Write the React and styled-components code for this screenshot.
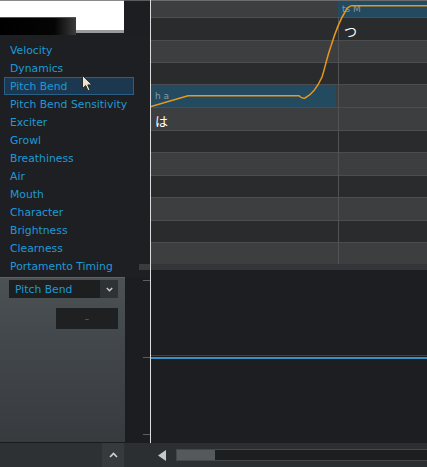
import React from 'react';
import styled, { createGlobalStyle } from 'styled-components';

const params = [
  'Velocity', 'Dynamics', 'Pitch Bend', 'Pitch Bend Sensitivity', 'Exciter', 'Growl',
  'Breathiness', 'Air', 'Mouth', 'Character', 'Brightness', 'Clearness', 'Portamento Timing',
];

// piano roll rows, top to bottom: [height, light key?]
const rows = [
  [17, true], [23, false], [22, true], [22, false], [23, true], [23, true],
  [22, false], [23, true], [22, false], [23, true], [22, false], [22, true],
];

function App() {
  return (
    <>
      <GlobalStyle />
      <Frame>
        <Main>
          <LeftPane>
            <Header>
              <Logo>
                <LogoTop />
                <LogoBottom>
                  <LogoBlack />
                  <LogoRest />
                </LogoBottom>
              </Logo>
              <HeaderFill />
            </Header>
            <ParamList>
              {params.map((p) => (
                <ParamItem key={p} $selected={p === 'Pitch Bend'}>{p}</ParamItem>
              ))}
              <Cursor width="11" height="17" viewBox="0 0 11 17">
                <path d="M0.5 0.5 L0.5 13.5 L3.7 10.6 L6 15.8 L8 14.9 L5.8 9.9 L10 9.9 Z" fill="#e9e1d2" stroke="#2a2a2a" strokeWidth="1" />
              </Cursor>
              <SplitHandle />
            </ParamList>
            <BottomRow>
              <ParamPanel>
                <Dropdown>
                  <DropdownText>Pitch Bend</DropdownText>
                  <DropdownButton>
                    <svg width="7" height="5" viewBox="0 0 7 5">
                      <polyline points="0.8,1 3.5,3.8 6.2,1" fill="none" stroke="#c9ccce" strokeWidth="1.4" />
                    </svg>
                  </DropdownButton>
                </Dropdown>
                <ValueRow>
                  <ValueBox>–</ValueBox>
                </ValueRow>
              </ParamPanel>
              <TickGutter>
                <Tick />
                <Tick />
                <Tick />
              </TickGutter>
            </BottomRow>
          </LeftPane>
          <Divider />
          <RightPane>
            <Grid>
              {rows.map(([h, light], i) => (
                <GridRow key={i} $h={h} $light={light} $first={i === 0} />
              ))}
              <Note $left={0} $top={85} $width={185} $height={22}>h a</Note>
              <Note $left={187} $top={1} $width={89} $height={16}>ts M</Note>
              <Lyric $left={4} $top={113}>は</Lyric>
              <Lyric $left={193} $top={23}>つ</Lyric>
              <Curve width="276" height="264" viewBox="0 0 276 264">
                <line x1="187.5" y1="17" x2="187.5" y2="264" stroke="#505255" strokeWidth="1" />
                <path
                  d="M0 106.5 L37 95.8 L148 95.8 Q151 99 154 98 C162 94 167 86 171 77 C174 68 176 57 180 46 C184 33 189 20 194 12 C196 8 198 5.8 201 5.8 L276 5.8"
                  fill="none" stroke="#e8981f" strokeWidth="1.5"
                />
              </Curve>
            </Grid>
            <Splitter />
            <ControlArea>
              <GreyLine />
              <BlueLine />
            </ControlArea>
          </RightPane>
        </Main>
        <BottomBar>
          <BottomLeft>
            <UpButton>
              <svg width="9" height="6" viewBox="0 0 9 6">
                <polyline points="1,5 4.5,1.5 8,5" fill="none" stroke="#cfd2d4" strokeWidth="1.6" />
              </svg>
            </UpButton>
          </BottomLeft>
          <BottomGap />
          <ScrollLeft>
            <svg width="8" height="11" viewBox="0 0 8 11">
              <polygon points="8,0 0,5.5 8,11" fill="#c6c9cb" />
            </svg>
          </ScrollLeft>
          <ScrollTrack>
            <ScrollThumb />
          </ScrollTrack>
        </BottomBar>
      </Frame>
    </>
  );
}

// Styles

const GlobalStyle = createGlobalStyle`
  html, body {
    margin: 0;
    padding: 0;
    background: #1d1e21;
  }
  body {
    font-family: "DejaVu Sans", Verdana, sans-serif;
  }
`;

const Frame = styled.div`
  width: 427px;
  height: 467px;
  display: flex;
  flex-direction: column;
  overflow: hidden;
  background: #1d1e21;
`;

const Main = styled.div`
  height: 443px;
  display: flex;
`;

const LeftPane = styled.div`
  width: 150px;
  display: flex;
  flex-direction: column;
  background: #1e1f22;
`;

const Header = styled.div`
  height: 35px;
  display: flex;
`;

const Logo = styled.div`
  width: 124px;
  display: flex;
  flex-direction: column;
  border-top: 1px solid #8a8a8a;
`;

const LogoTop = styled.div`
  height: 16px;
  background: #ffffff;
`;

const LogoBottom = styled.div`
  flex: 1;
  display: flex;
`;

const LogoBlack = styled.div`
  width: 76px;
  background: linear-gradient(90deg, #000 0%, #050505 72%, #3c3c3c 100%);
  border-top: 1px solid #4b5858;
`;

const LogoRest = styled.div`
  flex: 1;
  background: #ffffff;
  border-bottom: 3px solid #9a9a9a;
  margin-bottom: 2px;
`;

const HeaderFill = styled.div`
  flex: 1;
  background: #1d1e21;
  border-top: 1px solid #5a5c5e;
`;

const ParamList = styled.div`
  position: relative;
  flex: 1;
  padding-top: 6px;
  display: flex;
  flex-direction: column;
`;

const ParamItem = styled.div`
  height: 18px;
  box-sizing: border-box;
  margin-left: 4px;
  width: 130px;
  padding-left: 5px;
  display: flex;
  align-items: center;
  font-size: 10.8px;
  color: #1d9ad6;
  white-space: nowrap;
  border: 1px solid ${(p) => (p.$selected ? '#2a5f86' : 'transparent')};
  background: ${(p) => (p.$selected ? '#1b3850' : 'transparent')};
`;

const Cursor = styled.svg`
  position: absolute;
  left: 82px;
  top: 40px;
`;

const SplitHandle = styled.div`
  position: absolute;
  right: 0;
  top: 229px;
  width: 11px;
  height: 6px;
  background: #393b3e;
`;

const BottomRow = styled.div`
  height: 166px;
  display: flex;
`;

const ParamPanel = styled.div`
  width: 125px;
  box-sizing: border-box;
  border-top: 1px solid #5c6164;
  border-bottom: 1px solid #1a1b1d;
  background: linear-gradient(180deg, #4c5154 0%, #41464a 45%, #383b3e 100%);
  padding: 2px 7px 0 9px;
  display: flex;
  flex-direction: column;
  gap: 10px;
`;

const Dropdown = styled.div`
  height: 18px;
  display: flex;
  background: #1c1e20;
`;

const DropdownText = styled.div`
  flex: 1;
  padding-left: 6px;
  display: flex;
  align-items: center;
  font-size: 10.8px;
  color: #1d9ad6;
`;

const DropdownButton = styled.div`
  width: 18px;
  display: flex;
  align-items: center;
  justify-content: center;
  background: #2f3235;
`;

const ValueRow = styled.div`
  display: flex;
  justify-content: flex-end;
`;

const ValueBox = styled.div`
  width: 62px;
  height: 21px;
  display: flex;
  align-items: center;
  justify-content: center;
  background: #1e2022;
  color: #2f7fae;
  font-size: 9px;
`;

const TickGutter = styled.div`
  flex: 1;
  display: flex;
  flex-direction: column;
  align-items: flex-end;
  padding-top: 3px;
  gap: 76px;
  background: #1c1d20;
`;

const Tick = styled.div`
  width: 7px;
  height: 1px;
  background: #5b5e61;
`;

const Divider = styled.div`
  width: 1px;
  background: #dcdcdc;
`;

const RightPane = styled.div`
  flex: 1;
  display: flex;
  flex-direction: column;
`;

const Grid = styled.div`
  position: relative;
  height: 264px;
  display: flex;
  flex-direction: column;
  overflow: hidden;
`;

const GridRow = styled.div`
  height: ${(p) => p.$h}px;
  box-sizing: border-box;
  background: ${(p) => (p.$light ? '#3c3e40' : '#2a2b2d')};
  border-top: 1px solid ${(p) => (p.$first ? '#6a6c6e' : '#4b4d50')};
`;

const Note = styled.div`
  position: absolute;
  left: ${(p) => p.$left}px;
  top: ${(p) => p.$top}px;
  width: ${(p) => p.$width}px;
  height: ${(p) => p.$height}px;
  background: #244a5f;
  box-sizing: border-box;
  padding-left: 4px;
  display: flex;
  align-items: center;
  font-size: 9px;
  color: #8699a5;
`;

const Lyric = styled.div`
  position: absolute;
  left: ${(p) => p.$left}px;
  top: ${(p) => p.$top}px;
  font-family: "Noto Sans CJK JP", "DejaVu Sans", sans-serif;
  font-size: 13px;
  line-height: 16px;
  color: #ffffff;
`;

const Curve = styled.svg`
  position: absolute;
  left: 0;
  top: 0;
`;

const Splitter = styled.div`
  height: 6px;
  background: #333538;
`;

const ControlArea = styled.div`
  flex: 1;
  background: #1d1e21;
  padding-top: 85px;
  display: flex;
  flex-direction: column;
  gap: 1px;
`;

const GreyLine = styled.div`
  height: 1px;
  background: #3c3e41;
`;

const BlueLine = styled.div`
  height: 2px;
  background: #3a8fc3;
`;

const BottomBar = styled.div`
  flex: 1;
  display: flex;
  align-items: center;
  background: #2c2f32;
`;

const BottomLeft = styled.div`
  width: 125px;
  align-self: stretch;
  display: flex;
  justify-content: flex-end;
  background: #2e3134;
`;

const UpButton = styled.div`
  width: 22px;
  margin-right: 1px;
  display: flex;
  align-items: center;
  justify-content: center;
  background: #363a3d;
`;

const BottomGap = styled.div`
  width: 33px;
`;

const ScrollLeft = styled.div`
  width: 18px;
  display: flex;
  align-items: center;
`;

const ScrollTrack = styled.div`
  flex: 1;
  height: 12px;
  box-sizing: border-box;
  margin-top: -1px;
  border: 1px solid #45484b;
  border-right: none;
  background: #1c1e20;
  display: flex;
`;

const ScrollThumb = styled.div`
  width: 38px;
  background: #55595c;
`;

export default App;
